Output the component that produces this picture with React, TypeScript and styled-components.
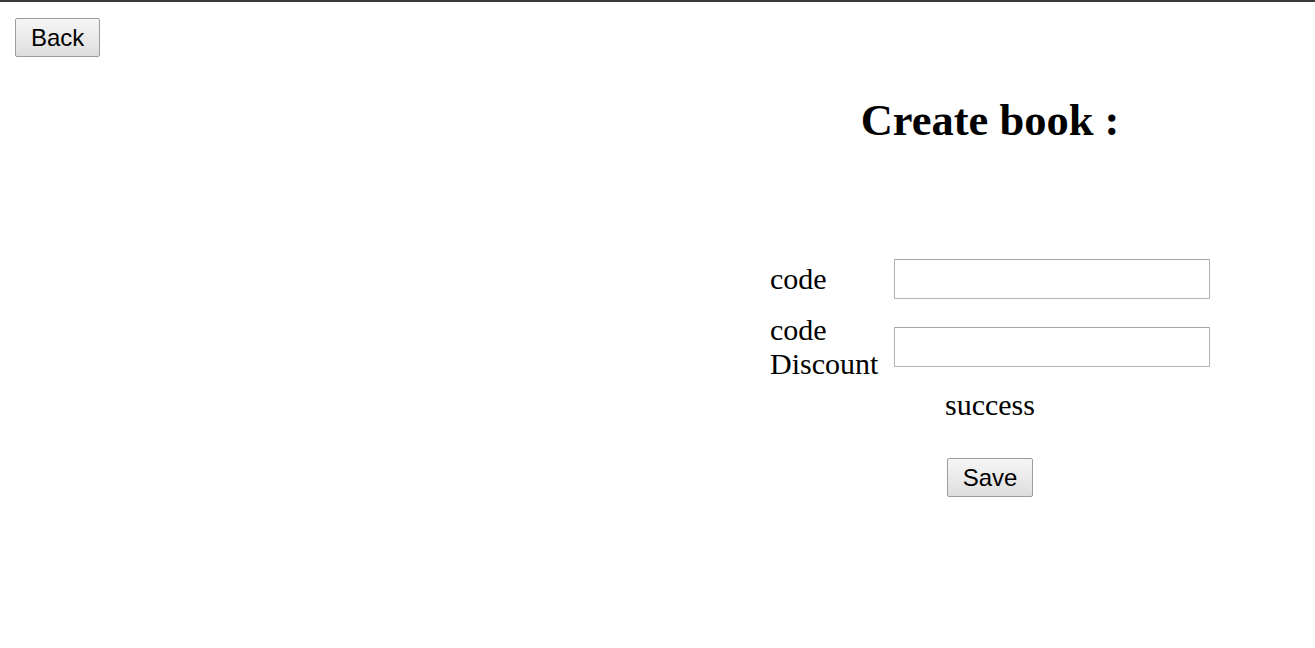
import React from "react";
import styled, { createGlobalStyle } from "styled-components";

const GlobalStyle = createGlobalStyle`
  html, body {
    margin: 0;
    padding: 0;
    background: #ffffff;
  }
  body {
    font-family: "Liberation Serif", "Times New Roman", serif;
    color: #000000;
    border-top: 2px solid #3a3a3a;
  }
`;

const Page = styled.div`
  width: 1315px;
  min-height: 646px;
`;

const TopBar = styled.div`
  padding: 16px 0 0 15px;
`;

const Button = styled.button`
  height: 39px;
  padding: 0 15px;
  font-family: "Liberation Sans", Arial, sans-serif;
  font-size: 24px;
  color: #000000;
  background: linear-gradient(#f6f6f6, #dedede);
  border: 1px solid #9c9c9c;
  border-radius: 2px;
  cursor: pointer;
`;

const Main = styled.div`
  display: grid;
  grid-template-columns: 665px 1fr;
`;

const Column = styled.div`
  display: flex;
  flex-direction: column;
  align-items: center;
`;

const Title = styled.h2`
  margin: 40px 0 0;
  font-size: 44.5px;
  line-height: 46px;
  font-weight: bold;
`;

const Form = styled.div`
  margin-top: 116px;
  display: grid;
  grid-template-columns: 112px 316px;
  column-gap: 12px;
  row-gap: 14px;
  align-items: center;
`;

const Label = styled.label`
  font-size: 30px;
  line-height: 34px;
`;

const Input = styled.input`
  box-sizing: border-box;
  width: 316px;
  height: 40px;
  margin: 0;
  border: 1px solid #b4b4b4;
  border-top-color: #a6a6a6;
  font-size: 24px;
  background: #ffffff;
`;

const Message = styled.div`
  margin-top: 7px;
  font-size: 30px;
  line-height: 34px;
`;

const Actions = styled.div`
  margin-top: 36px;
`;

export default function App() {
  return (
    <Page>
      <GlobalStyle />
      <TopBar>
        <Button>Back</Button>
      </TopBar>
      <Main>
        <div />
        <Column>
          <Title>Create book :</Title>
          <Form>
            <Label>code</Label>
            <Input />
            <Label>
              code
              <br />
              Discount
            </Label>
            <Input />
          </Form>
          <Message>success</Message>
          <Actions>
            <Button>Save</Button>
          </Actions>
        </Column>
      </Main>
    </Page>
  );
}
